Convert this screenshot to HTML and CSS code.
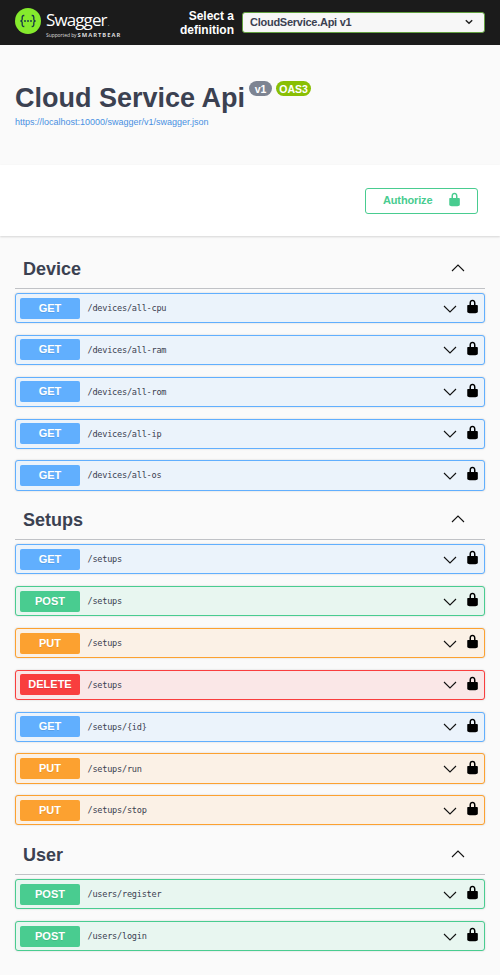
FILE: index.html
```html
<!DOCTYPE html>
<html lang="en">
<head>
<meta charset="utf-8">
<title>Swagger UI</title>
<link rel="stylesheet" href="styles.css">
</head>
<body>
<svg width="0" height="0" class="defs" aria-hidden="true">
  <symbol id="lock" viewBox="0 0 20 20"><path d="M15.8 8H14V5.6C14 2.7 12.7 1 10 1 7.200 1 6 2.700 6 5.600V8H4c-.55 0-1 .65-1 1.200V17c0 .550.400 1.100.900 1.300l1.300.400c.500.200 1.300.300 1.800.300h6c.550 0 1.300-.100 1.900-.300l1.300-.400c.500-.200.900-.800.900-1.300V9.200c0-.550-.700-1.200-1.300-1.200zM12 8H8V5.200C8 3.700 8.700 3 10 3s2 .7 2 2.200V8z"/></symbol>
  <symbol id="down" viewBox="0 0 14 8"><path d="M1 1l6 6 6-6" fill="none" stroke="currentColor" stroke-width="1.1"/></symbol>
  <symbol id="up" viewBox="0 0 14 8"><path d="M1 7l6-6 6 6" fill="none" stroke="currentColor" stroke-width="1.1"/></symbol>
</svg>
<header class="topbar">
  <a class="logo">
    <svg class="logo-mark" viewBox="0 0 26 26">
      <circle cx="13" cy="13" r="13" fill="#85ea2d"/>
      <g fill="none" stroke="#173647" stroke-width="1.3"><path d="M9.300 7.500H8.700Q7.200 7.500 7.200 9v2.200Q7.200 13 5.400 13q1.800 0 1.800 1.800V17q0 1.500 1.500 1.500h.6M16.700 7.500h.6q1.500 0 1.500 1.500v2.200q0 1.800 1.800 1.800-1.800 0-1.800 1.800V17q0 1.500-1.500 1.500h-.6"/></g>
      <g fill="#173647"><circle cx="10" cy="13" r=".9"/><circle cx="13" cy="13" r=".9"/><circle cx="16" cy="13" r=".9"/></g>
    </svg>
    <span class="logo-text">
      <span class="logo-name">Swagger<i>.</i></span>
      <span class="logo-by"><span class="supported">Supported by</span><b>SMARTBEAR</b></span>
    </span>
  </a>
  <div class="definition">
    <span class="definition-label">Select a<br>definition</span>
    <div class="select"><span>CloudService.Api v1</span>
      <svg width="8" height="6" viewBox="0 0 8 6"><path d="M.8 1.200L4 4.300l3.200-3.100" fill="none" stroke="#222" stroke-width="1.500"/></svg>
    </div>
  </div>
</header>
<section class="info">
  <div class="title-row"><h1>Cloud Service Api</h1><span class="pill version">v1</span><span class="pill oas">OAS3</span></div>
  <a class="link">https://localhost:10000/swagger/v1/swagger.json</a>
</section>
<section class="auth">
  <div class="authorize"><span>Authorize</span><svg class="lock"><use href="#lock"/></svg></div>
</section>
<main>
  <section class="tag">
    <div class="tag-head"><h2>Device</h2><svg class="arrow"><use href="#up"/></svg></div>
    <div class="op get"><span class="method">GET</span><span class="path">/devices/all-cpu</span><svg class="arrow"><use href="#down"/></svg><svg class="lock"><use href="#lock"/></svg></div>
    <div class="op get"><span class="method">GET</span><span class="path">/devices/all-ram</span><svg class="arrow"><use href="#down"/></svg><svg class="lock"><use href="#lock"/></svg></div>
    <div class="op get"><span class="method">GET</span><span class="path">/devices/all-rom</span><svg class="arrow"><use href="#down"/></svg><svg class="lock"><use href="#lock"/></svg></div>
    <div class="op get"><span class="method">GET</span><span class="path">/devices/all-ip</span><svg class="arrow"><use href="#down"/></svg><svg class="lock"><use href="#lock"/></svg></div>
    <div class="op get"><span class="method">GET</span><span class="path">/devices/all-os</span><svg class="arrow"><use href="#down"/></svg><svg class="lock"><use href="#lock"/></svg></div>
  </section>
  <section class="tag">
    <div class="tag-head"><h2>Setups</h2><svg class="arrow"><use href="#up"/></svg></div>
    <div class="op get"><span class="method">GET</span><span class="path">/setups</span><svg class="arrow"><use href="#down"/></svg><svg class="lock"><use href="#lock"/></svg></div>
    <div class="op post"><span class="method">POST</span><span class="path">/setups</span><svg class="arrow"><use href="#down"/></svg><svg class="lock"><use href="#lock"/></svg></div>
    <div class="op put"><span class="method">PUT</span><span class="path">/setups</span><svg class="arrow"><use href="#down"/></svg><svg class="lock"><use href="#lock"/></svg></div>
    <div class="op delete"><span class="method">DELETE</span><span class="path">/setups</span><svg class="arrow"><use href="#down"/></svg><svg class="lock"><use href="#lock"/></svg></div>
    <div class="op get"><span class="method">GET</span><span class="path">/setups/{id}</span><svg class="arrow"><use href="#down"/></svg><svg class="lock"><use href="#lock"/></svg></div>
    <div class="op put"><span class="method">PUT</span><span class="path">/setups/run</span><svg class="arrow"><use href="#down"/></svg><svg class="lock"><use href="#lock"/></svg></div>
    <div class="op put"><span class="method">PUT</span><span class="path">/setups/stop</span><svg class="arrow"><use href="#down"/></svg><svg class="lock"><use href="#lock"/></svg></div>
  </section>
  <section class="tag">
    <div class="tag-head"><h2>User</h2><svg class="arrow"><use href="#up"/></svg></div>
    <div class="op post"><span class="method">POST</span><span class="path">/users/register</span><svg class="arrow"><use href="#down"/></svg><svg class="lock"><use href="#lock"/></svg></div>
    <div class="op post"><span class="method">POST</span><span class="path">/users/login</span><svg class="arrow"><use href="#down"/></svg><svg class="lock"><use href="#lock"/></svg></div>
  </section>
</main>
</body>
</html>
```
FILE: styles.css
```css
* { box-sizing: border-box; }
body { margin: 0; height: 975px; overflow: hidden; background: #fafafa; color: #3b4151; font-family: "Liberation Sans", Arial, sans-serif; }
.defs { display: block; }
.topbar { height: 45px; background: #1b1b1b; color: #fff; display: flex; align-items: center; justify-content: space-between; padding: 0 15px; }
.logo { display: flex; align-items: flex-start; height: 29px; }
.logo-mark { width: 26px; height: 26px; }
.logo-text { display: flex; flex-direction: column; margin: 3px 0 0 5px; white-space: nowrap; }
.logo-name { font: 17px/17px "Open Sans", sans-serif; letter-spacing: -0.9px; }
.logo-name i { font-size: 8px; font-style: normal; color: #888; margin-left: 1px; }
.logo-by { display: flex; align-items: center; margin-top: 1px; font: 5px/6px "Open Sans", sans-serif; color: #ddd; }
.supported { width: 31.5px; letter-spacing: -0.08px; }
.logo-by b { font-size: 5.8px; letter-spacing: 1px; }
.definition { display: flex; align-items: center; gap: 8px; }
.definition-label { font-size: 12px; line-height: 14px; font-weight: bold; text-align: right; }
.select { width: 243px; height: 21px; border: 1px solid #62a03f; border-radius: 3px; background: #f7f7f7; color: #3b4151; font-size: 11px; font-weight: bold; display: flex; align-items: center; justify-content: space-between; padding: 0 11px 1px 7px; letter-spacing: -0.26px; }
.info { height: 120px; padding: 36px 15px 0; }
.title-row { display: flex; align-items: flex-start; height: 35px; }
h1 { margin: 0; font-size: 27px; line-height: 34px; white-space: nowrap; }
.pill { height: 15px; line-height: 16px; border-radius: 8px; color: #fff; font-size: 10.5px; font-weight: bold; text-align: center; }
.version { width: 23px; background: #7d8492; margin-left: 4px; }
.oas { width: 35px; background: #89bf04; margin-left: 4px; }
.link { display: block; font-size: 9px; line-height: 12px; color: #4990e2; }
.auth { height: 71px; padding: 22.5px 22px 0; background: #fff; box-shadow: 0 1px 2px rgba(0,0,0,.15); }
.authorize { width: 113px; height: 26px; margin-left: auto; border: 1.5px solid #49cc90; border-radius: 3px; color: #49cc90; font-size: 11px; font-weight: bold; letter-spacing: -0.15px; display: flex; align-items: center; justify-content: space-between; padding: 0 15px 2px 17px; }
.lock { width: 15px; height: 15px; fill: currentColor; }
.arrow { width: 14px; height: 8px; color: #111; }
main { padding: 15px 15px 0; }
.tag-head { height: 38px; border-bottom: 1px solid #c0c2c6; display: flex; align-items: center; justify-content: space-between; padding: 0 20px 1px 8px; margin-bottom: 4px; }
h2 { margin: 0; font-size: 18px; line-height: 22px; }
.tag-head .arrow { margin-bottom: 3px; }
.op { height: 30.2px; margin-bottom: 11.66px; border: 1px solid; border-radius: 3px; box-shadow: 0 0 2px rgba(0,0,0,.19); display: flex; align-items: center; padding: 0 4px 0 4px; }
.method { width: 60px; height: 21px; border-radius: 2px; color: #fff; font-size: 11px; line-height: 21px; font-weight: bold; text-align: center; text-shadow: 0 1px 0 rgba(0,0,0,.1); }
.path { flex: 1; margin-left: 7.5px; color: #3b4151; font-family: "DejaVu Sans Mono", monospace; font-size: 8.6px; letter-spacing: -0.25px; }
.op .arrow { margin: 1px 8px 0 0; }
.op .lock { color: #000; margin-bottom: 3px; }
.get { border-color: #61affe; background: #ebf3fb; }
.get .method { background: #61affe; }
.post { border-color: #49cc90; background: #e8f6f0; }
.post .method { background: #49cc90; }
.put { border-color: #fca130; background: #fbf1e6; }
.put .method { background: #fca130; }
.delete { border-color: #f93e3e; background: #fae7e7; }
.delete .method { background: #f93e3e; }
```
